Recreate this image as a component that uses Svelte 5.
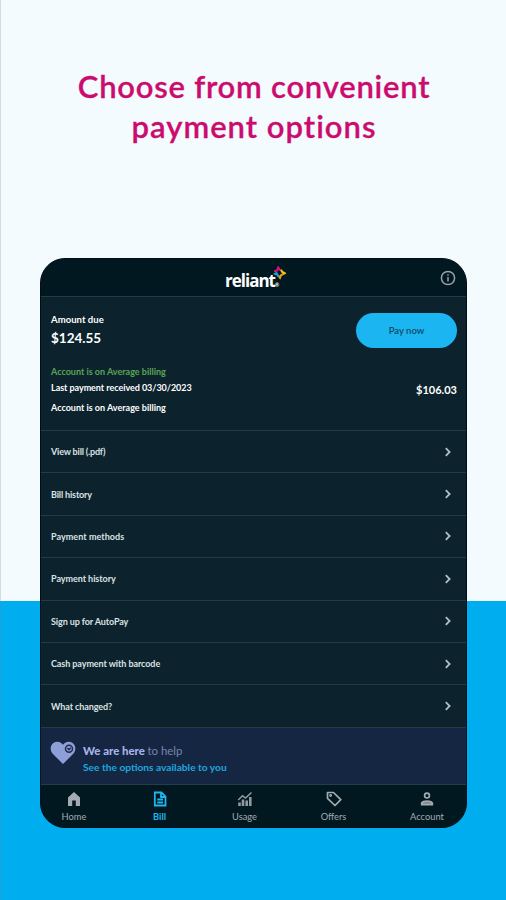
<script lang="ts">
  const rows = [
    { label: 'View bill (.pdf)', spacing: -0.18 },
    { label: 'Bill history', spacing: -0.15 },
    { label: 'Payment methods', spacing: 0.05 },
    { label: 'Payment history', spacing: -0.05 },
    { label: 'Sign up for AutoPay', spacing: -0.1 },
    { label: 'Cash payment with barcode', spacing: -0.08 },
    { label: 'What changed?', spacing: -0.1 }
  ]
</script>

<main class="page">
  <h1 class="headline">
    <span class="line first">Choose from convenient</span>
    <span class="line second">payment options</span>
  </h1>

  <section class="card">
    <header class="header">
      <div class="logo">
        <span class="word">reliant</span><span class="reg">®</span>
        <svg class="star" viewBox="0 0 14 14" fill="none" stroke-width="2.1">
          <path d="M2 5.5L5 4.6L6.2 1.6L8 4.4" stroke="#d5127d" />
          <path d="M9 3.6L10 5.8L12.8 7.2L10.4 8.4" stroke="#f0c31c" />
          <path d="M10.6 8.6L9 9.2L8 11.6L6.8 10" stroke="#f39a1e" />
          <path d="M6.4 10.6L5.4 8.8L3.2 7.8L5.4 6.6" stroke="#16a5e0" />
        </svg>
      </div>
      <svg class="info" viewBox="0 0 16 16" fill="none" stroke="#98a2a8" stroke-width="1.5">
        <circle cx="8" cy="8" r="6.6" />
        <path d="M8 7V11.6M8 4.2V5.8" />
      </svg>
    </header>

    <div class="summary">
      <div class="due">
        <div>
          <div class="due-label">Amount due</div>
          <div class="due-value">$124.55</div>
        </div>
        <button class="pay">Pay now</button>
      </div>
      <div class="note green">Account is on Average billing</div>
      <div class="note last">
        <span class="received">Last payment received 03/30/2023</span>
        <span class="paid">$106.03</span>
      </div>
      <div class="note">Account is on Average billing</div>
    </div>

    <div class="rows">
      {#each rows as row}
        <div class="row">
          <span style="letter-spacing:{row.spacing}px">{row.label}</span>
          <svg viewBox="0 0 8 10" fill="none" stroke="#b4bdc2" stroke-width="1.8">
            <path d="M1.8 1.2L5.6 5L1.8 8.8" />
          </svg>
        </div>
      {/each}
    </div>

    <div class="help">
      <svg class="heart" viewBox="0 0 26 24">
        <path d="M13 23L3.2 13.2C-.5 9.4.1 4.4 3.4 2C6.6-.2 10.6.5 13 3.8C15.4.5 19.4-.2 22.6 2C25.9 4.4 26.5 9.4 22.8 13.2Z" fill="#8d9fd6" />
        <circle cx="19" cy="7.7" r="3.5" fill="none" stroke="#1c2b50" stroke-width="1.5" />
        <path d="M17.4 7L19 8.8L20.8 6.8" fill="none" stroke="#1c2b50" stroke-width="1.4" />
      </svg>
      <div>
        <div class="help-title"><b>We are here</b> <span>to help</span></div>
        <div class="help-link">See the options available to you</div>
      </div>
    </div>

    <nav class="nav">
      <div class="tab">
        <svg viewBox="0 0 16 16" fill="#a3abb0">
          <path d="M8 1L14 6.4V15H9.8V9.5H6.2V15H2V6.4Z" />
        </svg>
        <span>Home</span>
      </div>
      <div class="tab bill">
        <svg viewBox="0 0 16 16" fill="none" stroke="#1fb5ee" stroke-width="1.8">
          <path d="M2.8 1.5H9.5L13.5 5.5V14.5H2.8Z" />
          <path d="M9 1.5V6H13.5M5.3 8.5H11M5.3 11.5H11" />
        </svg>
        <span>Bill</span>
      </div>
      <div class="tab">
        <svg viewBox="0 0 16 16" fill="none" stroke="#909a9f" stroke-width="1.5">
          <path d="M1.2 9L5.5 4.8L8.5 7L14.5 1.5" />
          <path d="M2.5 15V11.5M6 15V8.5M9.7 15V9.5M13.3 15V6" stroke-width="2.6" />
        </svg>
        <span>Usage</span>
      </div>
      <div class="tab">
        <svg viewBox="0 0 16 16" fill="none" stroke="#a3abb0" stroke-width="1.7">
          <path d="M1.5 1.5H7.5L14.8 8.6L9 14.5L1.5 7.3Z" stroke-linejoin="round" />
          <circle cx="4.6" cy="4.5" r=".6" />
        </svg>
        <span>Offers</span>
      </div>
      <div class="tab">
        <svg viewBox="0 0 16 16" fill="none" stroke="#a3abb0" stroke-width="1.7">
          <circle cx="8" cy="4.6" r="2.4" />
          <path d="M2.7 13.6V12C4.5 9.3 11.5 9.3 13.3 12V13.6Z" fill="#808a90" />
        </svg>
        <span>Account</span>
      </div>
    </nav>
  </section>
</main>

<style>
  :global(body) {
    margin: 0;
  }
  .page {
    box-sizing: border-box;
    width: 506px;
    height: 900px;
    overflow: hidden;
    background: linear-gradient(#f3fbff 601px, #00aeef 601px);
    border-left: 1px solid rgba(110, 130, 140, 0.25);
    padding-left: 39px;
    font-family: Lato, 'Open Sans', sans-serif;
  }
  .headline {
    box-sizing: border-box;
    width: 428px;
    height: 258px;
    margin: 0;
    padding-top: 66px;
    font-size: 31px;
    line-height: 40px;
    font-weight: 600;
    text-align: center;
    color: #cb0c6e;
    -webkit-text-stroke: 0.3px #cb0c6e;
  }
  .line {
    display: block;
    white-space: nowrap;
  }
  .first {
    letter-spacing: 0.76px;
  }
  .second {
    letter-spacing: 1px;
  }
  .card {
    box-sizing: border-box;
    width: 427px;
    height: 570px;
    border: 1px solid #020d16;
    border-radius: 25px;
    overflow: hidden;
    background: #0c232d;
    color: #fff;
    font-size: 9px;
    font-weight: 700;
  }
  .header {
    box-sizing: border-box;
    height: 38px;
    display: flex;
    justify-content: flex-end;
    align-items: center;
    padding-right: 10px;
    background: #021820;
    border-bottom: 1px solid #243c42;
  }
  .logo {
    position: relative;
    display: flex;
    align-items: flex-end;
    width: 61px;
    margin-right: 154px;
    padding-top: 6px;
    line-height: 20px;
  }
  .word {
    font-family: 'Open Sans', sans-serif;
    font-size: 17px;
    letter-spacing: -1px;
  }
  .reg {
    font-size: 5px;
    line-height: 12px;
  }
  .star {
    position: absolute;
    right: 0;
    top: 1px;
    width: 14px;
    height: 14px;
  }
  .info {
    width: 16px;
    height: 16px;
  }
  .summary {
    box-sizing: border-box;
    height: 134px;
    padding: 16px 9px 0 10px;
    border-bottom: 1px solid #243c42;
  }
  .due {
    display: flex;
    justify-content: space-between;
    height: 51px;
  }
  .due-label {
    line-height: 14px;
    font-size: 9.5px;
    letter-spacing: 0.05px;
  }
  .due-value {
    font-size: 13.5px;
    line-height: 22px;
  }
  .pay {
    width: 101px;
    height: 35px;
    border: 0;
    border-radius: 18px;
    background: #1bb5f1;
    color: #0c4b68;
    font: 600 9.5px Lato, sans-serif;
  }
  .note {
    line-height: 16px;
    white-space: nowrap;
  }
  .green {
    color: #5ba356;
  }
  .last {
    display: flex;
    justify-content: space-between;
    height: 20px;
  }
  .received {
    letter-spacing: -0.05px;
  }
  .paid {
    font-size: 11px;
    line-height: 20px;
  }
  .row {
    box-sizing: border-box;
    height: 42.4px;
    display: flex;
    align-items: center;
    justify-content: space-between;
    padding: 0 14px 0 10px;
    border-bottom: 1px solid #243c42;
    color: #dce1e4;
  }
  .row svg {
    width: 8px;
    height: 10px;
  }
  .help {
    box-sizing: border-box;
    height: 57px;
    display: flex;
    gap: 7px;
    padding: 13px 10px 0 9px;
    background: #152643;
    border-bottom: 1px solid #243c4c;
  }
  .heart {
    width: 26px;
    height: 24px;
  }
  .help-title {
    padding-top: 1px;
    font-size: 11.4px;
    line-height: 17px;
    color: #a6b2e8;
  }
  .help-title span {
    font-weight: 400;
    color: #7785ac;
  }
  .help-link {
    font-size: 10.2px;
    line-height: 16px;
    color: #1ea8df;
  }
  .nav {
    display: grid;
    grid-template-columns: 66px 105px 65px 113px 74px;
    height: 45px;
    padding-top: 6px;
    background: #021820;
  }
  .tab {
    display: flex;
    flex-direction: column;
    align-items: center;
    font-weight: 400;
    font-size: 9.3px;
    line-height: 20px;
    color: #a3abb0;
  }
  .tab svg {
    width: 16px;
    height: 16px;
  }
  .bill {
    color: #1fb5ee;
    font-weight: 700;
  }
</style>
